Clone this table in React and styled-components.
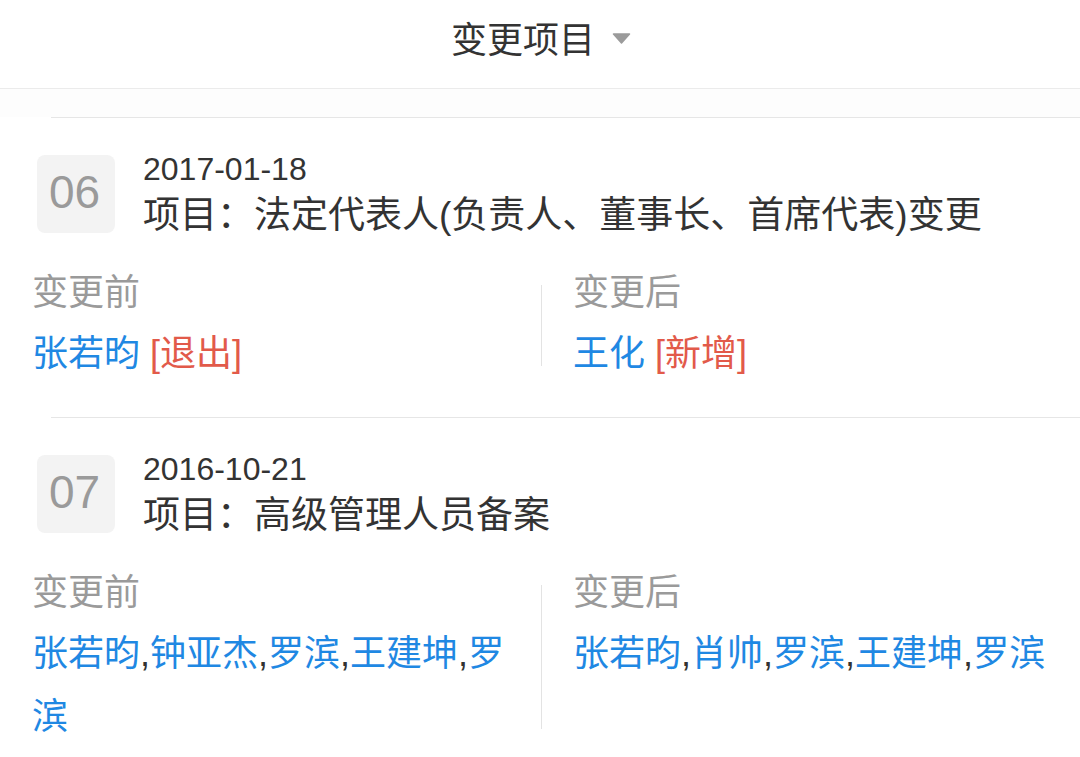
import React from "react";
import styled, { createGlobalStyle } from "styled-components";

const GlobalStyle = createGlobalStyle`
  html, body {
    margin: 0;
    padding: 0;
    overflow: hidden;
    background: #ffffff;
  }
  body {
    font-family: "Liberation Sans", "Noto Sans CJK SC", sans-serif;
    color: #333333;
    -webkit-font-smoothing: antialiased;
  }
`;

const Page = styled.div`
  width: 1080px;
  height: 757px;
  overflow: hidden;
  background: #ffffff;
`;

const Header = styled.header`
  height: 89px;
  box-sizing: border-box;
  border-bottom: 1px solid #ebebeb;
  display: flex;
  justify-content: center;
  align-items: flex-start;
`;

const TitleButton = styled.div`
  display: flex;
  align-items: center;
  gap: 17px;
  height: 75px;
  padding-left: 2px;
`;

const Title = styled.span`
  font-family: "Noto Sans CJK SC", sans-serif;
  font-size: 36px;
  line-height: 75px;
  color: #333333;
`;

const Caret = styled.svg`
  width: 19px;
  height: 11px;
  display: block;
  margin-top: 1px;
`;

const List = styled.div`
  padding-top: 28px;
  background: linear-gradient(#fdfdfd, #fdfdfd) top / 100% 28px no-repeat;
`;

const Separator = styled.div`
  height: 1px;
  margin-left: 51px;
  background: #e6e6e6;
`;

const Item = styled.section`
  padding: 30px 0 32px;
`;

const ItemHead = styled.div`
  display: flex;
  align-items: flex-start;
  gap: 28px;
  padding-left: 37px;
`;

const Badge = styled.div`
  width: 78px;
  height: 78px;
  margin-top: 7px;
  border-radius: 8px;
  background: #f3f3f3;
  display: flex;
  align-items: center;
  justify-content: center;
  font-family: "Liberation Sans", sans-serif;
  font-size: 46px;
  color: #9a9a9a;
  padding-bottom: 4px;
  padding-right: 3px;
  box-sizing: border-box;
`;

const HeadText = styled.div`
  display: flex;
  flex-direction: column;
`;

const DateText = styled.div`
  font-size: 32px;
  line-height: 42px;
  color: #333333;
`;

const ItemTitle = styled.div`
  font-size: 37px;
  line-height: 52px;
  color: #333333;
  white-space: nowrap;
`;

const Columns = styled.div`
  display: grid;
  grid-template-columns: 541px 1px 1fr;
  margin-top: 24px;
`;

const Column = styled.div`
  padding: ${(p) => (p.$right ? "0 0 0 31px" : "0 20px 0 32px")};
  min-width: 0;
`;

const Divider = styled.div`
  background: #e3e3e3;
  margin: 19px 0 19px;
`;

const Label = styled.div`
  font-family: "Noto Sans CJK SC", sans-serif;
  font-size: 36px;
  line-height: 46px;
  color: #9a9a9a;
  margin-bottom: 10px;
`;

const Names = styled.div`
  font-size: 36px;
  line-height: 63px;
  color: #333333;
`;

const Name = styled.span`
  color: #1f88e3;
`;

const Tag = styled.span`
  color: #e25a4a;
`;

const items = [
  {
    no: "06",
    date: "2017-01-18",
    title: "项目：法定代表人(负责人、董事长、首席代表)变更",
    before: { names: ["张若昀"], tag: "[退出]" },
    after: { names: ["王化"], tag: "[新增]" },
  },
  {
    no: "07",
    date: "2016-10-21",
    title: "项目：高级管理人员备案",
    before: { names: ["张若昀", "钟亚杰", "罗滨", "王建坤", "罗滨"] },
    after: { names: ["张若昀", "肖帅", "罗滨", "王建坤", "罗滨"] },
  },
];

function NameList({ data }) {
  return (
    <Names>
      {data.names.map((n, i) => (
        <React.Fragment key={i}>
          {i > 0 && ","}
          <Name>{n}</Name>
        </React.Fragment>
      ))}
      {data.tag && (
        <>
          {" "}
          <Tag>{data.tag}</Tag>
        </>
      )}
    </Names>
  );
}

export default function App() {
  return (
    <Page>
      <GlobalStyle />
      <Header>
        <TitleButton>
          <Title>变更项目</Title>
          <Caret viewBox="0 0 19 11">
            <path d="M1.5 1 L17.5 1 L9.5 10 Z" fill="#9b9b9b" stroke="#9b9b9b" strokeWidth="1.5" strokeLinejoin="round" />
          </Caret>
        </TitleButton>
      </Header>
      <List>
        {items.map((it) => (
          <React.Fragment key={it.no}>
            <Separator />
            <Item>
              <ItemHead>
                <Badge>{it.no}</Badge>
                <HeadText>
                  <DateText>{it.date}</DateText>
                  <ItemTitle>{it.title}</ItemTitle>
                </HeadText>
              </ItemHead>
              <Columns>
                <Column>
                  <Label>变更前</Label>
                  <NameList data={it.before} />
                </Column>
                <Divider />
                <Column $right>
                  <Label>变更后</Label>
                  <NameList data={it.after} />
                </Column>
              </Columns>
            </Item>
          </React.Fragment>
        ))}
      </List>
    </Page>
  );
}
